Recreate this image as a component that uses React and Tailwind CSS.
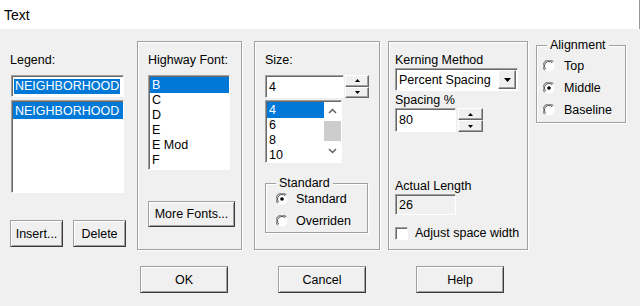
import React from "react";

const sunken =
  "border border-t-[#a0a0a0] border-l-[#a0a0a0] border-r-[#ffffff] border-b-[#ffffff] shadow-[inset_1px_1px_0_#696969]";
const raised =
  "border border-t-[#a0a0a0] border-l-[#a0a0a0] border-r-[#3c3c3c] border-b-[#3c3c3c] shadow-[inset_1px_1px_0_#ffffff,inset_-1px_-1px_0_#a0a0a0]";
const small3d =
  "border border-t-[#ffffff] border-l-[#ffffff] border-r-[#696969] border-b-[#696969] shadow-[inset_-1px_-1px_0_#a0a0a0]";

function Btn({ children, className = "" }) {
  return (
    <div className={`flex items-center justify-center bg-[#f0f0f0] ${raised} ${className}`}>
      {children}
    </div>
  );
}

function Radio({ checked }) {
  return (
    <svg width="12" height="12" viewBox="0 0 12 12" className="shrink-0">
      <circle cx="6" cy="6" r="5.5" fill="#ffffff" />
      <path d="M1.8 10.2 A5.5 5.5 0 0 1 10.2 1.8" fill="none" stroke="#8a8a8a" strokeWidth="1.2" />
      <path d="M2.8 9.2 A4.2 4.2 0 0 1 9.2 2.8" fill="none" stroke="#505050" strokeWidth="1" />
      {checked && <circle cx="6" cy="6" r="1.8" fill="#000000" />}
    </svg>
  );
}

function Spin({ className = "" }) {
  return (
    <div className={`flex flex-col ${className}`}>
      <div className={`flex-1 flex items-center justify-center bg-[#f0f0f0] ${small3d}`}>
        <svg width="5" height="3" viewBox="0 0 5 3"><path d="M0 3 L2.5 0 L5 3 Z" fill="#000" /></svg>
      </div>
      <div className={`flex-1 flex items-center justify-center bg-[#f0f0f0] ${small3d}`}>
        <svg width="5" height="3" viewBox="0 0 5 3"><path d="M0 0 L2.5 3 L5 0 Z" fill="#000" /></svg>
      </div>
    </div>
  );
}

function Group({ className = "", children }) {
  return (
    <div className={`border border-[#a0a0a0] shadow-[inset_1px_1px_0_#ffffff,1px_1px_0_#ffffff] ${className}`}>
      {children}
    </div>
  );
}

export default function App() {
  return (
    <div className="w-[640px] h-[306px] bg-[#f0f0f0] text-black text-[12.5px] leading-[16px] font-['Liberation_Sans',Arial,sans-serif] overflow-hidden">
      <div className="h-[29px] bg-white border-r border-[#9a9a9a] flex items-center pl-[4px] text-[14px]">
        Text
      </div>
      <div className="pl-[10px] pt-[12px]">
        <div className="flex items-start">
          {/* Legend */}
          <div className="w-[116px] h-[209px] flex flex-col">
            <div className="mt-[11px]">Legend:</div>
            <div className={`ml-[1px] mt-[7px] w-[113px] h-[22px] bg-white ${sunken} flex items-center pl-[2px] overflow-hidden`}>
              <span className="bg-[#0078d7] text-white px-[1px] leading-[15px]">NEIGHBORHOOD</span>
            </div>
            <div className={`ml-[1px] mt-[3px] w-[113px] h-[93px] bg-white ${sunken} pt-[1px] pl-[1px]`}>
              <div className="bg-[#0078d7] text-white h-[17px] pl-[2px] flex items-center">NEIGHBORHOOD</div>
            </div>
            <div className="flex mt-[27px]">
              <Btn className="w-[53px] h-[27px]">Insert...</Btn>
              <Btn className="ml-[10px] w-[53px] h-[27px]">Delete</Btn>
            </div>
          </div>

          {/* Highway Font */}
          <Group className="ml-[11px] w-[105px] h-[209px] pl-[10px] pt-[10px] flex flex-col">
            <div>Highway Font:</div>
            <div className={`mt-[7px] w-[82px] h-[95px] bg-white ${sunken} pt-[1px] pl-[1px] overflow-hidden leading-[15px]`}>
              <div className="bg-[#0078d7] text-white h-[16px] pl-[2px] flex items-center">B</div>
              <div className="pl-[2px]">C</div>
              <div className="pl-[2px]">D</div>
              <div className="pl-[2px]">E</div>
              <div className="pl-[2px]">E Mod</div>
              <div className="pl-[2px]">F</div>
            </div>
            <Btn className="mt-[31px] w-[87px] h-[26px]">More Fonts...</Btn>
          </Group>

          {/* Size */}
          <Group className="ml-[12px] w-[126px] h-[209px] pl-[10px] pt-[10px] flex flex-col">
            <div>Size:</div>
            <div className="mt-[7px] flex">
              <div className={`w-[79px] h-[23px] bg-white ${sunken} flex items-center pl-[3px]`}>4</div>
              <Spin className="ml-[1px] w-[24px] h-[23px]" />
            </div>
            <div className={`mt-[2px] w-[77px] h-[63px] bg-white ${sunken} flex overflow-hidden`}>
              <div className="flex-1 pt-[1px] pl-[1px] leading-[15px]">
                <div className="bg-[#0078d7] text-white h-[16px] pl-[2px] flex items-center">4</div>
                <div className="pl-[2px]">6</div>
                <div className="pl-[2px]">8</div>
                <div className="pl-[2px]">10</div>
              </div>
              <div className="w-[17px] flex flex-col items-center">
                <svg width="17" height="19" viewBox="0 0 17 19" className="mt-[1px]">
                  <path d="M5 11 L8.5 7.5 L12 11" fill="none" stroke="#606060" strokeWidth="1.5" />
                </svg>
                <div className="w-[17px] h-[20px] bg-[#cdcdcd]" />
                <svg width="17" height="19" viewBox="0 0 17 19" className="mt-[1px]">
                  <path d="M5 7 L8.5 10.5 L12 7" fill="none" stroke="#606060" strokeWidth="1.5" />
                </svg>
              </div>
            </div>
            <Group className="relative mt-[20px] w-[103px] h-[50px] flex flex-col">
              <div className="absolute left-[10px] top-[-9px] bg-[#f0f0f0] px-[3px]">Standard</div>
              <div className="flex items-center mt-[7px] ml-[10px]">
                <Radio checked />
                <span className="ml-[8px]">Standard</span>
              </div>
              <div className="flex items-center mt-[6px] ml-[10px]">
                <Radio />
                <span className="ml-[8px]">Overriden</span>
              </div>
            </Group>
          </Group>

          {/* Kerning */}
          <Group className="ml-[8px] w-[140px] h-[209px] pl-[6px] pt-[10px] flex flex-col">
            <div>Kerning Method</div>
            <div className={`w-[123px] h-[23px] bg-white ${sunken} flex items-center pl-[3px] pr-[1px]`}>
              <span className="flex-1">Percent Spacing</span>
              <div className={`w-[18px] h-[19px] bg-[#f0f0f0] ${small3d} flex items-center justify-center`}>
                <svg width="7" height="4" viewBox="0 0 7 4"><path d="M0 0 L7 0 L3.5 4 Z" fill="#000" /></svg>
              </div>
            </div>
            <div className="mt-[1px]">Spacing %</div>
            <div className="flex">
              <div className={`w-[61px] h-[24px] bg-white ${sunken} flex items-center pl-[3px]`}>80</div>
              <Spin className="ml-[2px] w-[25px] h-[24px]" />
            </div>
            <div className="mt-[47px] leading-[15px]">Actual Length</div>
            <div className={`w-[61px] h-[21px] bg-[#f0f0f0] ${sunken} flex items-center pl-[3px]`}>26</div>
            <div className="flex items-center mt-[10px]">
              <div className={`w-[13px] h-[13px] bg-white ${sunken}`} />
              <span className="ml-[7px]">Adjust space width</span>
            </div>
          </Group>

          {/* Alignment */}
          <Group className="relative ml-[8px] mt-[4px] w-[90px] h-[78px] flex flex-col">
            <div className="absolute left-[10px] top-[-9px] bg-[#f0f0f0] px-[3px]">Alignment</div>
            <div className="flex items-center mt-[12px] ml-[6px]">
              <Radio />
              <span className="ml-[9px]">Top</span>
            </div>
            <div className="flex items-center mt-[6px] ml-[6px]">
              <Radio checked />
              <span className="ml-[9px]">Middle</span>
            </div>
            <div className="flex items-center mt-[6px] ml-[6px]">
              <Radio />
              <span className="ml-[9px]">Baseline</span>
            </div>
          </Group>
        </div>

        <div className="flex mt-[16px] ml-[130px]">
          <Btn className="w-[88px] h-[27px]">OK</Btn>
          <Btn className="ml-[50px] w-[88px] h-[27px]">Cancel</Btn>
          <Btn className="ml-[50px] w-[88px] h-[27px]">Help</Btn>
        </div>
      </div>
    </div>
  );
}
